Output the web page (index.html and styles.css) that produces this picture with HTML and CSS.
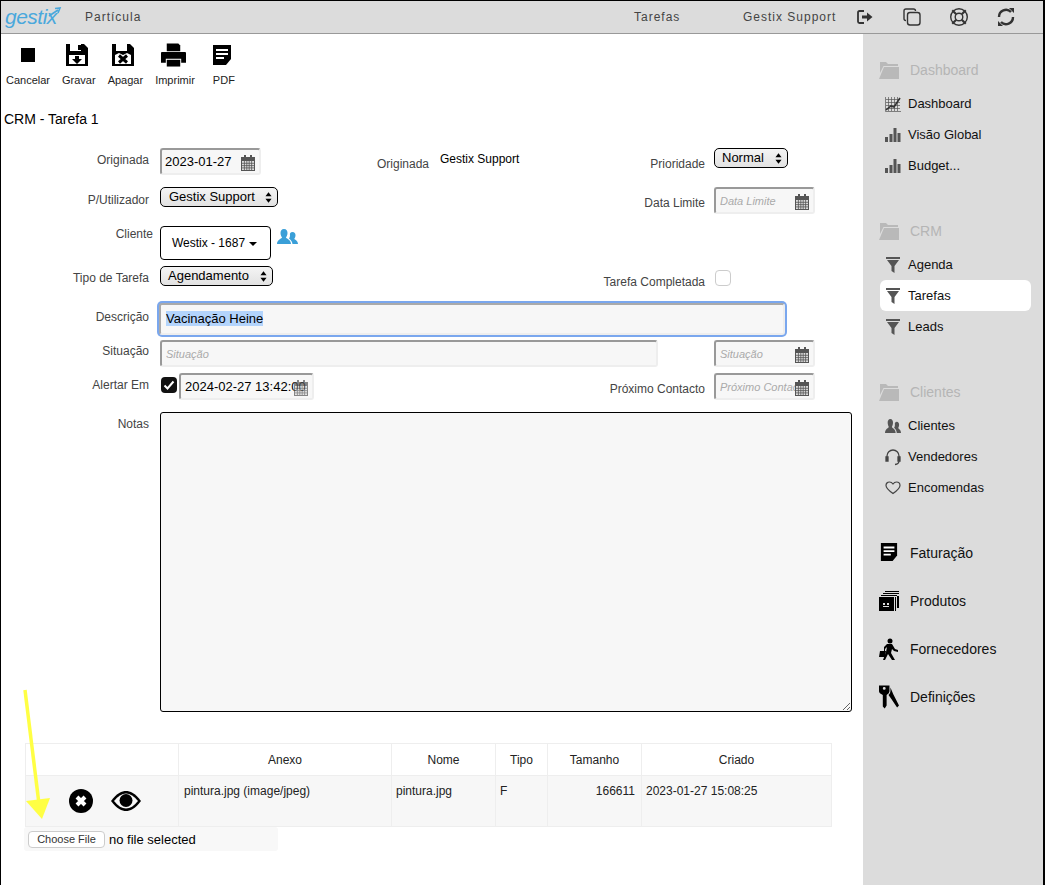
FILE: index.html
```html
<!DOCTYPE html>
<html lang="pt">
<head>
  <meta charset="UTF-8" />
  <title>Gestix - Tarefas</title>
  <link rel="stylesheet" href="styles.css">
</head>
<body>
  <svg class="defs" width="0" height="0">
    <defs>
      <symbol id="i-cal" viewBox="0 0 16 16">
        <path fill="#555" d="M1 2h3V0h2v2h4V0h2v2h3v14H1z"/>
        <path fill="#ddd" d="M2 6h12v9H2z"/>
        <path stroke="#555" stroke-width=".8" d="M2 8.300h12M2 10.600h12M2 12.900h12M4.400 6v9M6.800 6v9M9.200 6v9M11.600 6v9"/>
      </symbol>
      <symbol id="i-folder" viewBox="0 0 20 18">
        <path fill="#b9b9b9" d="M1 1h6l2 2h10v2H4.500L1 12z"/>
        <path fill="#b9b9b9" d="M5 6h15v12H0z"/>
      </symbol>
      <symbol id="i-funnel" viewBox="0 0 14 16">
        <path fill="#555" d="M0 0h14v2H0zM1 3h12L8.500 9v7l-3-2V9z"/>
      </symbol>
      <symbol id="i-bars" viewBox="0 0 16 16">
        <path fill="#555" d="M0 10h3v5H0zM4.500 7h3v8h-3zM8.500 1h3v14h-3zM12.500 6h3v9h-3z"/>
      </symbol>
      <symbol id="i-users" viewBox="0 0 21 15" preserveAspectRatio="none">
        <path d="M7 0c2.500 0 3.500 2 3.500 4s-1 3.500-1.500 4.500c0 1 5 2 5 6.500H0c0-4.500 5-5.500 5-6.500C4.500 7.500 3.500 6 3.500 4S4.500 0 7 0z"/>
        <path d="M15.500 3c2 0 3 1.500 3 3.200s-.8 2.800-1.200 3.500c0 .8 3.700 1.500 3.700 5.300h-5.500c-.3-3-2.500-5-3.500-5.600.7-1 1-1.800 1-3.200C12.500 4.500 13.500 3 15.500 3z"/>
      </symbol>
      <symbol id="i-note" viewBox="0 0 20 20">
        <path d="M1 0h18v14l-5 6H1z"/>
        <path fill="#fff" d="M4 4h12v2H4zM4 8h12v2H4zM4 12h8v2H4z"/>
      </symbol>
    </defs>
  </svg>

  <div class="topbar">
    <div class="logo">gestix<svg class="logo-arrow" viewBox="0 0 14 10" width="14" height="10"><path d="M1 9 10 3M7 1.500l5-.5-2 5" fill="none" stroke="#4aa8dc" stroke-width="1.600"/></svg></div>
    <span class="top-text company">Partícula</span>
    <span class="top-text page-name">Tarefas</span>
    <span class="top-text user">Gestix Support</span>
    <div class="top-icons">
      <svg viewBox="0 0 20 20" width="20" height="20" fill="none" stroke="#333" stroke-width="1.800"><path d="M9 4H4.500Q3 4 3 5.500v9Q3 16 4.500 16H9"/><path fill="#333" stroke="none" d="M7 8.500h5V5.500l5.500 4.500-5.500 4.500v-3H7z"/></svg>
      <svg viewBox="0 0 20 20" width="20" height="20" fill="none" stroke="#333" stroke-width="1.400"><path d="M4 13.500Q2 13.500 2 11.500V4Q2 2 4 2h7.500Q13.500 2 13.500 4"/><rect x="5.500" y="5.500" width="12.500" height="12.500" rx="2.500"/></svg>
      <svg viewBox="0 0 20 20" width="20" height="20" fill="none" stroke="#333" stroke-width="1.400"><circle cx="10" cy="10" r="8.300"/><circle cx="10" cy="10" r="3.800"/><path stroke="none" fill="#333" d="M4 2.500 8 6.500 6.500 8 2.500 4zM16 2.500 12 6.500 13.500 8 17.500 4zM4 17.500 8 13.500 6.500 12 2.500 16zM16 17.500 12 13.500 13.500 12 17.500 16z"/></svg>
      <svg viewBox="0 0 20 20" width="20" height="20" fill="none" stroke="#333" stroke-width="2.400"><path d="M3 10a7 7 0 0 1 12-5"/><path d="M17 10a7 7 0 0 1-12 5"/><path fill="#333" stroke="none" d="M13 1l5 0v5zM7 19H2v-5z"/></svg>
    </div>
  </div>

  <div class="layout">
    <div class="content">
      <div class="toolbar">
        <div class="tool">
          <svg viewBox="0 0 20 20" width="20" height="20"><rect x="3" y="3" width="14" height="14"/></svg>
          <span>Cancelar</span>
        </div>
        <div class="tool">
          <svg viewBox="0 0 24 24" width="24" height="24"><path fill-rule="evenodd" d="M1 1h4v7h11V1h3l4 4v18H1zM13 2h3v5h-3zM4 12v9h16v-9zM10 13h4v3h3l-5 5-5-5h3z"/></svg>
          <span>Gravar</span>
        </div>
        <div class="tool">
          <svg viewBox="0 0 24 24" width="24" height="24"><path d="M1 1h4v7h11V1h3l4 4v18H1z"/><path fill="#fff" d="M13 2h2v4h-2zM4 12l4-2 4 2 4-2 4 2v9H4z"/><path stroke="#000" stroke-width="3" d="M8 12.500l8 7M16 12.500l-8 7"/></svg>
          <span>Apagar</span>
        </div>
        <div class="tool">
          <svg viewBox="0 0 26 24" width="25" height="24"><path d="M6 0h12l2 2v6H6z"/><path d="M1 9h24q1 0 1 1v10h-5v-4H5v4H0V10q0-1 1-1z"/><path d="M6 17h14v7H6z"/></svg>
          <span>Imprimir</span>
        </div>
        <div class="tool tool-pdf">
          <svg width="20" height="22"><use href="#i-note"/></svg>
          <span>PDF</span>
        </div>
      </div>

      <h1 class="title">CRM - Tarefa 1</h1>

      <form class="form">
        <div class="row row-1">
          <label class="lbl lbl-first">Originada</label>
          <div class="date date-sm"><input class="inp" value="2023-01-27"><svg class="cal"><use href="#i-cal"/></svg></div>
          <label class="lbl lbl-orig">Originada</label>
          <span class="value">Gestix Support</span>
          <label class="lbl lbl-right lbl-low">Prioridade</label>
          <button type="button" class="sel">Normal<svg viewBox="0 0 8 12" width="7" height="11"><path d="M4 0l3.500 4.500h-7zM4 12L.500 7.500h7z"/></svg></button>
        </div>

        <div class="row row-2">
          <label class="lbl lbl-sel">P/Utilizador</label>
          <button type="button" class="sel sel-user">Gestix Support<svg viewBox="0 0 8 12" width="7" height="11"><path d="M4 0l3.500 4.500h-7zM4 12L.500 7.500h7z"/></svg></button>
          <label class="lbl lbl-right lbl-limit">Data Limite</label>
          <div class="date date-sm"><input class="inp inp-ph" placeholder="Data Limite"><svg class="cal"><use href="#i-cal"/></svg></div>
        </div>

        <div class="row row-3">
          <label class="lbl lbl-wide">Cliente</label>
          <button type="button" class="dropdown">Westix - 1687<i class="caret"></i></button>
          <svg class="add-user" width="21" height="15"><use href="#i-users"/></svg>
        </div>

        <div class="row row-4">
          <label class="lbl lbl-sel">Tipo de Tarefa</label>
          <button type="button" class="sel sel-tipo">Agendamento<svg viewBox="0 0 8 12" width="7" height="11"><path d="M4 0l3.500 4.500h-7zM4 12L.500 7.500h7z"/></svg></button>
          <label class="lbl lbl-right lbl-done">Tarefa Completada</label>
          <i class="check"></i>
        </div>

        <div class="row row-5">
          <label class="lbl">Descrição</label>
          <div class="inp inp-focus"><span class="selected">Vacinação Heine</span></div>
        </div>

        <div class="row row-6">
          <label class="lbl">Situação</label>
          <input class="inp inp-ph inp-sit" placeholder="Situação">
          <div class="date date-sm date-sit"><input class="inp inp-ph" placeholder="Situação"><svg class="cal"><use href="#i-cal"/></svg></div>
        </div>

        <div class="row row-7">
          <label class="lbl">Alertar Em</label>
          <i class="check checked"><svg viewBox="0 0 16 16" width="16" height="16"><path d="M3.500 8.500l3 3 6-7" fill="none" stroke="#fff" stroke-width="2"/></svg></i>
          <div class="date date-alert"><input class="inp" value="2024-02-27 13:42:00"><svg class="cal"><use href="#i-cal"/></svg></div>
          <label class="lbl lbl-right lbl-next">Próximo Contacto</label>
          <div class="date date-sm"><input class="inp inp-ph" placeholder="Próximo Contacto"><svg class="cal"><use href="#i-cal"/></svg></div>
        </div>

        <div class="row row-8">
          <label class="lbl">Notas</label>
          <textarea class="notes"></textarea>
        </div>
      </form>

      <table class="files">
        <thead>
          <tr><th class="c-act"></th><th class="c-anexo">Anexo</th><th class="c-nome">Nome</th><th class="c-tipo">Tipo</th><th class="c-tam">Tamanho</th><th>Criado</th></tr>
        </thead>
        <tbody>
          <tr>
            <td class="actions">
              <svg viewBox="0 0 24 24" width="24" height="24"><circle cx="12" cy="12" r="12"/><path d="M8 8l8 8M16 8l-8 8" stroke="#fff" stroke-width="4"/></svg>
              <svg viewBox="0 0 30 20" width="30" height="20"><path d="M0 10C6 2 11 0 15 0s9 2 15 10c-6 8-11 10-15 10S6 18 0 10z"/><path fill="#f7f7f7" d="M3 10c4-5 8-7.500 12-7.500S23 5 27 10c-4 5-8 7.500-12 7.500S7 15 3 10z"/><circle cx="15" cy="9.500" r="6.500"/></svg>
            </td>
            <td class="anexo-cell">pintura.jpg (image/jpeg)</td>
            <td>pintura.jpg</td>
            <td>F</td>
            <td class="num">166611</td>
            <td>2023-01-27 15:08:25</td>
          </tr>
        </tbody>
      </table>
      <div class="upload"><button type="button" class="file-btn">Choose File</button><span>no file selected</span></div>
    </div>

    <div class="sidebar">
      <div class="side-group">
        <div class="side-head"><svg width="20" height="18"><use href="#i-folder"/></svg>Dashboard</div>
        <div class="side-item"><svg viewBox="0 0 16 16" width="16" height="16"><path fill="none" stroke="#555" stroke-width=".7" d="M.500 1v14.500H16M3.500 1v14M6.500 1v14M9.500 1v14M12.500 1v14M1 3.500h14M1 6.500h14M1 9.500h14M1 12.500h14"/><path fill="none" stroke="#333" stroke-width="1.600" d="M1 14l5-4 3 1 6-9"/></svg>Dashboard</div>
        <div class="side-item"><svg width="16" height="16"><use href="#i-bars"/></svg>Visão Global</div>
        <div class="side-item"><svg width="16" height="16"><use href="#i-bars"/></svg>Budget...</div>
      </div>
      <div class="side-group">
        <div class="side-head"><svg width="20" height="18"><use href="#i-folder"/></svg>CRM</div>
        <div class="side-item"><svg width="14" height="16"><use href="#i-funnel"/></svg>Agenda</div>
        <div class="side-item active"><svg width="14" height="16"><use href="#i-funnel"/></svg>Tarefas</div>
        <div class="side-item"><svg width="14" height="16"><use href="#i-funnel"/></svg>Leads</div>
      </div>
      <div class="side-group">
        <div class="side-head"><svg width="20" height="18"><use href="#i-folder"/></svg>Clientes</div>
        <div class="side-item"><svg class="users-icon" width="16" height="14"><use href="#i-users"/></svg>Clientes</div>
        <div class="side-item"><svg viewBox="0 0 16 18" width="16" height="18" fill="none" stroke="#444" stroke-width="1.300"><path d="M2 11V8a6 6 0 0 1 12 0v3"/><path fill="#444" d="M1 9h2v4H1zM13 9h2v4h-2z"/><path d="M14 13q0 3-4 3.500"/></svg>Vendedores</div>
        <div class="side-item"><svg viewBox="0 0 16 14" width="16" height="14" fill="none" stroke="#444" stroke-width="1.200"><path d="M8 12.500C3 9 1 7 1 4.500 1 2.500 2.500 1 4.500 1 6 1 7.300 2 8 3c.7-1 2-2 3.500-2C13.500 1 15 2.500 15 4.500c0 2.500-2 4.500-7 8z"/></svg>Encomendas</div>
      </div>
      <div class="side-main">
        <div class="main-item"><svg class="main-note" width="18" height="18"><use href="#i-note"/></svg>Faturação</div>
        <div class="main-item"><svg viewBox="0 0 20 20" width="20" height="20"><path d="M0 6h15v14H0z"/><path d="M2 4h16v1H2zM4 2h16v1H4zM6 0h14v1H6zM16 6h1v14h-1zM18 5h2v12h-2z"/><path fill="#ddd" d="M4 12h2v2H4zM8 12h2v2H8zM4 15h6v1H4z"/></svg>Produtos</div>
        <div class="main-item"><svg viewBox="0 0 20 22" width="20" height="22"><circle cx="11" cy="3" r="2.500"/><path d="M8 6h5l3 5 3 1v2l-4-1-2-2-1 4 4 7h-3l-4-6-3 6H4l3-8 1-5-2 2v2H5V9z"/><path d="M1 13h6l-1 6H0z"/></svg>Fornecedores</div>
        <div class="main-item"><svg viewBox="0 0 21 24" width="21" height="24"><path fill-rule="evenodd" d="M0 0h11v6q0 2-3 4v11l-2 3-2-2v-12Q0 8 0 6zM4 3a1.500 1.500 0 1 0 3 0 1.500 1.500 0 1 0-3 0z"/><path d="M12 2l3 7 6 12-2 2-6-9-3-4q2-2 2-4z"/></svg>Definições</div>
      </div>
    </div>
  </div>

  <!-- seta amarela por cima da tabela -->
  <svg class="arrow" width="30" height="135" viewBox="0 0 30 135"><path d="M5 1 19 115" stroke="#ffff44" stroke-width="3.500"/><path d="M6 112 30 109 22 130z" fill="#ffff44"/></svg>
</body>
</html>
```

FILE: styles.css
```css
* { box-sizing:border-box; }
html, body { margin:0; padding:0; }
body {
  font-family:"Liberation Sans",Arial,sans-serif;
  font-size:12px;
  color:#000;
  background:#fff;
  height:885px;
  overflow:hidden;
  position:relative;
  border-left:1px solid #000;
  border-right:2px solid #000;
  border-top:1px solid #000;
}
.defs { position:absolute; }

/* barra de cima */
.topbar {
  height:33px;
  padding-bottom:1px;
  background:#dcdcdc;
  border-bottom:1px solid #999;
  display:flex;
  align-items:center;
}
.logo {
  font-size:21px;
  font-style:italic;
  color:#4aa8dc;
  letter-spacing:-.5px;
  margin-left:4px;
  width:80px;
  position:relative;
}
.logo-arrow { position:absolute; left:43px; top:2px; }
.top-text { letter-spacing:1px; color:#444; font-size:12px; }
.company { width:549px; }
.page-name { width:109px; }
.user { width:115px; }
.top-icons { display:flex; gap:27px; margin-left:-3px; }

.layout { display:flex; height:851px; }
.content { width:862px; position:relative; }
.sidebar {
  width:180px;
  background:#dcdcdc;
  padding-top:21px;
}

/* botoes */
.toolbar { display:flex; gap:12px; padding:9px 0 0 5px; }
.tool {
  display:flex;
  flex-direction:column;
  align-items:center;
  gap:7px;
  font-size:11px;
  color:#222;
}
.tool svg { height:24px; margin-right:4px; }
.tool:first-child svg { margin-right:0; }
.tool-pdf { margin-left:5px; }
.title { font-size:14px; font-weight:normal; margin:25px 0 0 3px; }

/* formulario */
.form { margin-top:21px; }
.row { display:flex; align-items:flex-start; }
.lbl {
  width:148px;
  text-align:right;
  color:#444;
  margin-right:11px;
  padding-top:4px;
  flex:none;
}
.lbl-first { padding-top:5px; }
.inp {
  width:100%;
  height:27px;
  border:2px solid;
  border-color:#999 #eee #eee #999;
  border-radius:3px;
  background:#f7f7f7;
  font:13px "Liberation Sans",Arial,sans-serif;
  color:#000;
  padding:2px 3px;
  outline:none;
}
.inp-ph { padding-left:4px; }
.inp-ph::placeholder { font-size:11px; font-style:italic; color:#aaa; }
.date { position:relative; flex:none; }
.date-sm { width:101px; }
.date-alert { width:135px; margin-left:2px; }
.date-alert .inp { padding-left:4px; padding-right:0; }
.date-alert .cal { opacity:.7; }
.cal { position:absolute; right:5px; top:7px; width:16px; height:16px; }
.sel {
  height:20px;
  border:1px solid #000;
  border-radius:5px;
  background:linear-gradient(#f4f4f4,#e2e2e2);
  font:13px "Liberation Sans",Arial,sans-serif;
  color:#000;
  padding:0 5px 2px 7px;
  display:flex;
  align-items:center;
  justify-content:space-between;
  flex:none;
}
.sel svg { margin-top:2px; }
.value { width:207px; padding-top:4px; flex:none; }

.row-1 { height:39px; }
.lbl-orig { width:168px; padding-top:9px; }
.lbl-right { margin-right:9px; }
.lbl-low { padding-top:9px; margin-left:-61px; width:119px; }
.row-1 .sel { width:74px; }
.sel-user { width:118px; padding-left:8px; }
.sel-tipo { width:113px; }
.lbl-sel { padding-top:6px; }
.row-4 .lbl-sel { padding-top:5px; }
.row-2 { height:39px; }
.lbl-limit { width:418px; margin-left:9px; padding-top:9px; }
.row-3 { height:40px; }
.lbl-wide { margin-right:7px; width:152px; padding-top:1px; }
.dropdown {
  width:111px;
  height:34px;
  border:1px solid #000;
  border-radius:4px;
  background:#fff;
  font:12px "Liberation Sans",Arial,sans-serif;
  padding:0 6px 0 4px;
  flex:none;
}
.caret {
  display:inline-block;
  border:4px solid transparent;
  border-top-color:#000;
  border-bottom:0;
  margin-left:4px;
  vertical-align:middle;
}
.add-user { fill:#3a9fd8; margin:3px 0 0 6px; }
.row-4 { height:37px; }
.row-4 .lbl-done { width:433px; margin-left:-1px; margin-right:10px; padding-top:9px; }
.check {
  width:16px;
  height:16px;
  border:1px solid #ccc;
  border-radius:4px;
  margin-top:4px;
  flex:none;
  display:block;
}
.row-5 { height:37px; }
.row-5 .lbl { padding-top:7px; }
.inp-focus {
  width:626px;
  height:32px;
  margin-left:-1px;
  box-shadow:0 0 0 2px #7aa7ee;
  border-color:#aaa #eee #eee #aaa;
  padding:4px 5px;
  line-height:20px;
}
.selected { background:#b3d4fc; }
.row-6 { height:33px; }
.row-6 .lbl { padding-top:4px; }
.inp-sit { width:498px; flex:none; }
.date-sit { margin-left:56px; }
.row-7 { height:39px; }
.row-7 .lbl { padding-top:5px; }
.row-7 .check.checked {
  background:#111;
  margin:4px 0 0 1px;
  border:0;
}
.checked svg { display:block; }
.row-7 .lbl-next { width:380px; margin-left:11px; padding-top:9px; margin-right:9px; }
.row-8 .lbl { padding-top:5px; }
.notes {
  width:692px;
  height:300px;
  border:1px solid #000;
  border-radius:3px;
  background:#f7f7f7;
  flex:none;
  display:block;
}

/* anexos */
.files {
  border-collapse:collapse;
  width:807px;
  margin:31px 0 0 24px;
  table-layout:fixed;
  color:#222;
}
.files th, .files td { border:1px solid #eee; }
.files th { height:32px; font-weight:normal; background:#fff; }
.files td { height:51px; background:#f7f7f7; padding:8px 4px; vertical-align:top; }
.files td.anexo-cell { padding-left:5px; }
.c-act { width:153px; }
.c-anexo { width:213px; }
.c-nome { width:104px; }
.c-tipo { width:52px; }
.c-tam { width:94px; }
.files td.num { text-align:right; padding-right:6px; }
.files td.actions { padding:13px 0 0 43px; }
.actions svg { vertical-align:middle; margin-right:15px; }
.upload {
  margin-left:23px;
  width:254px;
  height:24px;
  background:#f8f8f8;
  border-radius:3px;
  display:flex;
  align-items:center;
  padding-left:4px;
  gap:4px;
  font-size:13px;
}
.file-btn {
  width:77px;
  height:17px;
  font:11px "Liberation Sans",Arial,sans-serif;
  color:#333;
  background:#fff;
  border:1px solid #ccc;
  border-radius:4px;
  padding:0;
}

/* menu lateral */
.side-group { margin-bottom:35px; }
.side-head {
  height:29px;
  margin-bottom:4px;
  display:flex;
  align-items:center;
  gap:11px;
  padding-left:16px;
  font-size:14px;
  color:#b5b5b5;
}
.side-item {
  height:31px;
  margin-left:17px;
  width:151px;
  display:flex;
  align-items:center;
  font-size:13px;
  color:#111;
  border-radius:6px;
}
.side-item svg { margin-left:5px; margin-right:7px; width:16px; flex:none; }
.side-item.active { background:#fff; }
.users-icon { fill:#555; }
.side-main { margin-top:-9px; }
.main-item {
  height:48px;
  display:flex;
  align-items:center;
  padding-left:16px;
  font-size:14px;
  color:#111;
}
.main-item svg { width:20px; margin-right:11px; flex:none; }
.main-item .main-note { width:18px; margin:0 12px 2px 1px; }

.arrow { position:absolute; left:19px; top:688px; }
```
